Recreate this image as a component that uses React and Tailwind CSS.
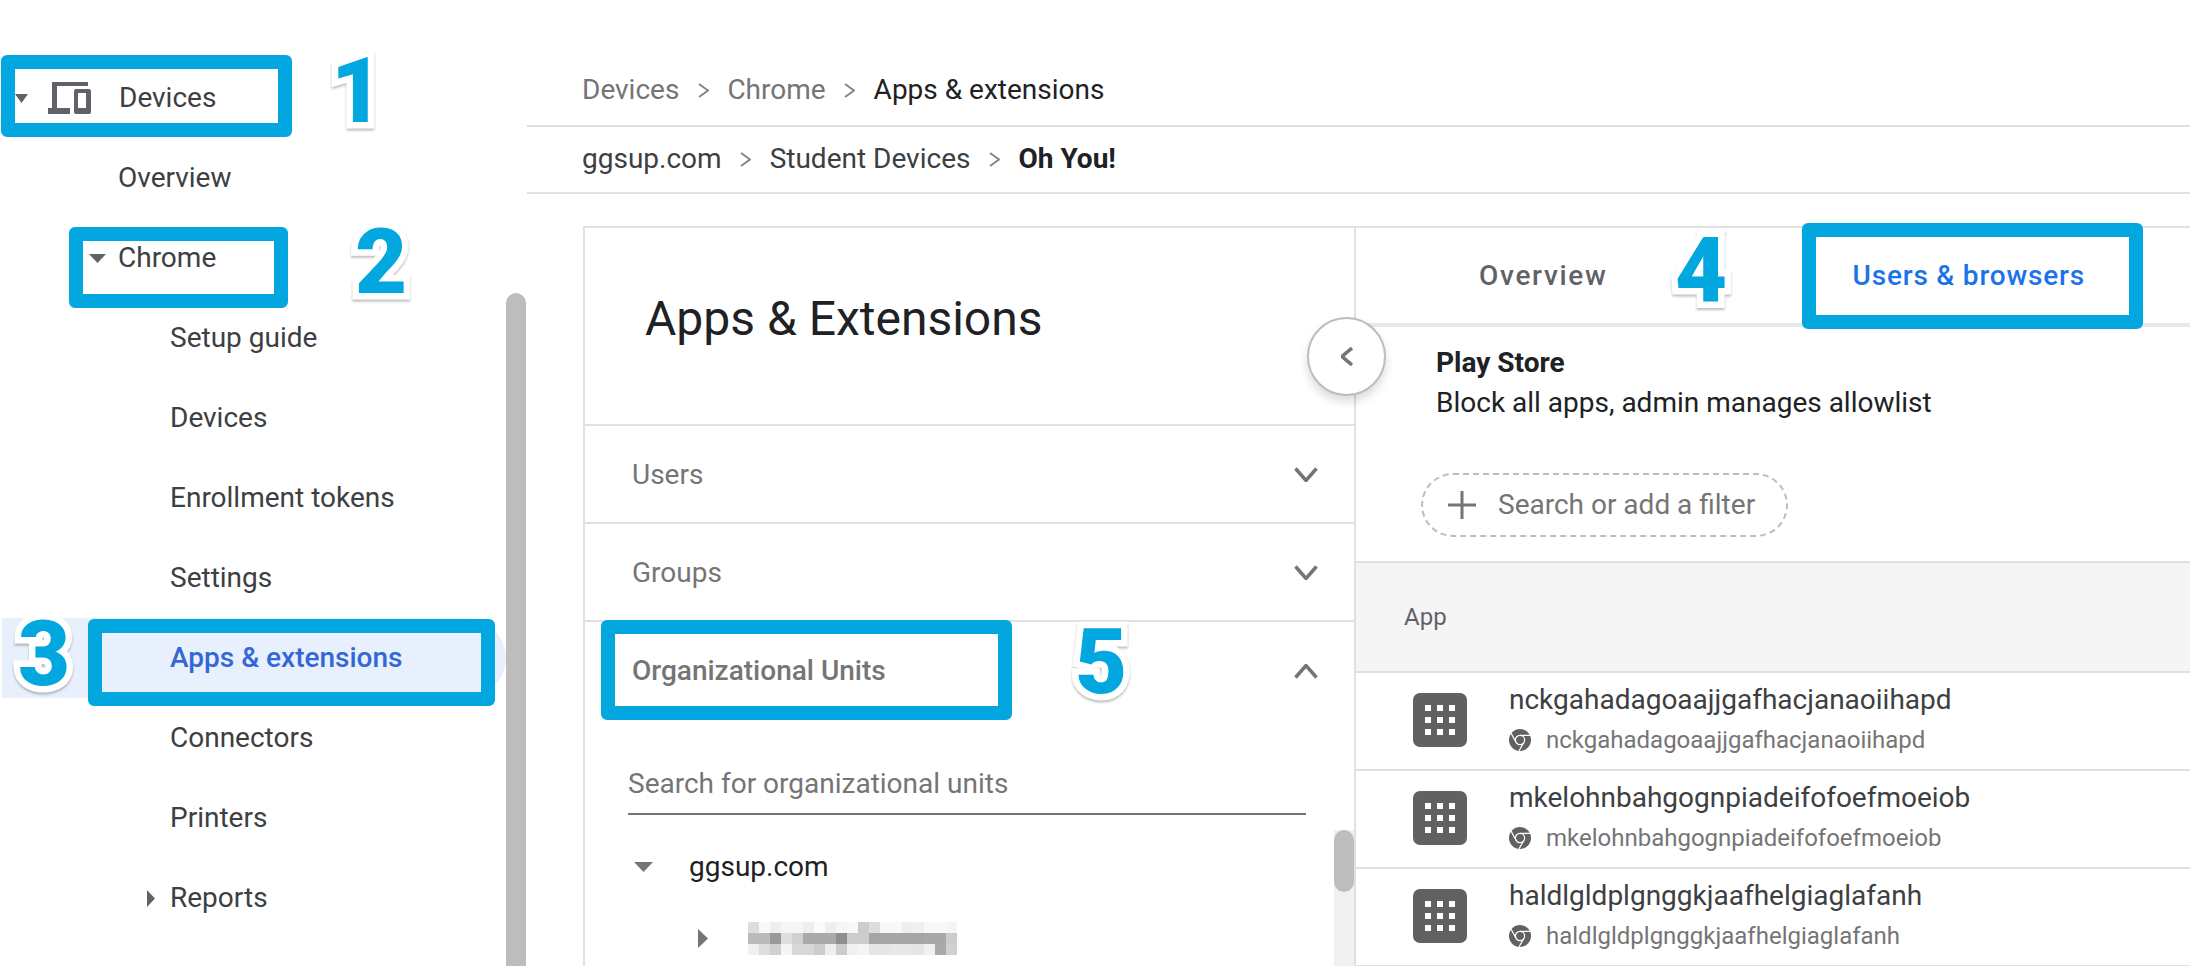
const Caret = ({ dir = "down", w, h, color = "#5f6368", className = "" }) => (
  <svg width={w} height={h} viewBox="0 0 10 10" preserveAspectRatio="none" className={className}>
    <polygon points={dir === "down" ? "0,0 10,0 5,10" : "0,0 10,5 0,10"} fill={color} />
  </svg>
);

const Chev = ({ dir = "right", w = 11, h = 15, sw = 2, color = "#80868b", className = "" }) => {
  const pts = {
    right: `1,1 ${w - 1},${h / 2} 1,${h - 1}`,
    left: `${w - 1},1 1,${h / 2} ${w - 1},${h - 1}`,
    down: `1.5,1.5 ${w / 2},${h - 1.5} ${w - 1.5},1.5`,
    up: `1.5,${h - 1.5} ${w / 2},1.5 ${w - 1.5},${h - 1.5}`,
  }[dir];
  return (
    <svg width={w} height={h} viewBox={`0 0 ${w} ${h}`} className={className}>
      <polyline points={pts} fill="none" stroke={color} strokeWidth={sw} />
    </svg>
  );
};

const Sep = () => (
  <span className="flex h-[40px] w-[48px] items-center justify-center">
    <Chev />
  </span>
);

const DevicesIcon = () => (
  <svg width="43" height="32" viewBox="0 0 43 32" className="shrink-0">
    <path d="M4 0H40V4H9V26H22V32H0V26H4Z" fill="#5f6368" />
    <path
      fillRule="evenodd"
      d="M28 7H41A2 2 0 0 1 43 9V30A2 2 0 0 1 41 32H28A2 2 0 0 1 26 30V9A2 2 0 0 1 28 7ZM30 11V26H38V11Z"
      fill="#5f6368"
    />
  </svg>
);

const AppIcon = () => (
  <div className="mt-[20px] ml-[57px] grid h-[54px] w-[54px] shrink-0 grid-cols-3 content-center justify-center gap-[6px] rounded-[7px] bg-[#616161] px-[12px]">
    {Array.from({ length: 9 }).map((_, i) => (
      <span key={i} className="h-[6px] w-[6px] bg-white" />
    ))}
  </div>
);

const ChromeMono = () => (
  <svg width="22" height="22" viewBox="0 0 22 22" className="shrink-0">
    <circle cx="11" cy="11" r="11" fill="#616161" />
    <circle cx="11" cy="11" r="4.6" fill="#616161" stroke="#fff" strokeWidth="1.2" />
    <path d="M11 6.4H21M15 13.3L10 21.8M7 13.3L2 4" stroke="#fff" strokeWidth="1.2" fill="none" />
  </svg>
);

const Blur = () => {
  const rows = [
    ["#dddddd", "#f8f8f8", "#eeeeee", "#f5f5f5", "#f5f5f5", "#eeeeee", "#fbfbfb", "#eeeeee", "#f5f5f5", "#f8f8f8", "#cccccc", "#dddddd", "#f8f8f8", "#f8f8f8", "#eeeeee", "#f0f0f0", "#f8f8f8", "#f8f8f8", "#f5f5f5"],
    ["#bbbbbb", "#bbbbbb", "#999999", "#dddddd", "#d0d0d0", "#aaaaaa", "#aaaaaa", "#aaaaaa", "#8f8f8f", "#cccccc", "#cccccc", "#a5a5a5", "#a5a5a5", "#a5a5a5", "#a5a5a5", "#a5a5a5", "#a8a8a8", "#a8a8a8", "#cccccc"],
    ["#f0f0f0", "#dddddd", "#d0d0d0", "#f5f5f5", "#d8d8d8", "#d8d8d8", "#cccccc", "#eeeeee", "#cccccc", "#f0f0f0", "#f5f5f5", "#e5e5e5", "#e5e5e5", "#e8e8e8", "#e8e8e8", "#e5e5e5", "#f0f0f0", "#aaaaaa", "#d0d0d0"],
  ];
  return (
    <svg width="209" height="33" viewBox="0 0 209 33" shapeRendering="crispEdges">
      {rows.map((r, y) =>
        r.map((c, x) => <rect key={`${x}-${y}`} x={x * 11} y={y * 11} width="11" height="11" fill={c} />)
      )}
    </svg>
  );
};

const NavRow = ({ children, className = "" }) => (
  <div className={`flex h-[80px] items-center ${className}`}>{children}</div>
);

const SubRow = ({ label }) => <NavRow className="pl-[170px]">{label}</NavRow>;

const Box = ({ className }) => (
  <div className={`absolute rounded-[6px] border-[14px] border-[#03a7e0] ${className}`} />
);

const Num = ({ n, className }) => (
  <div
    className={`absolute font-['Roboto'] text-[90px] leading-none font-black text-[#03a7e0] drop-shadow-[0_2px_1px_rgba(0,0,0,0.25)] [-webkit-text-stroke:13px_white] [paint-order:stroke_fill] ${className}`}
  >
    {n}
  </div>
);

const AccRow = ({ label, dir = "down" }) => (
  <div className="flex h-[98px] shrink-0 items-center justify-between border-b-2 border-[#e0e0e0] pr-[36px] pl-[47px] text-[#757575]">
    <span className="pt-[2px]">{label}</span>
    <Chev dir={dir} w={24} h={15} sw={3.5} color="#757575" />
  </div>
);

const AppRow = ({ id }) => (
  <div className="flex h-[98px] shrink-0 items-start border-b-2 border-[#e0e0e0]">
    <AppIcon />
    <div className="ml-[42px] pt-[10px]">
      <div className="leading-[34px] text-[#3c4043]">{id}</div>
      <div className="mt-[8px] flex h-[30px] items-center text-[24px] leading-[30px] text-[#757575]">
        <ChromeMono />
        <span className="ml-[15px]">{id}</span>
      </div>
    </div>
  </div>
);

export default function App() {
  return (
    <div className="relative flex h-[966px] w-[2190px] overflow-hidden bg-white font-['Roboto'] text-[28px] text-[#3c4043]">
      <aside className="flex w-[527px] shrink-0">
        <nav className="grow pt-[58px]">
          <NavRow className="pl-[15px]">
            <Caret w={13} h={9} />
            <span className="ml-[20px]"><DevicesIcon /></span>
            <span className="ml-[28px]">Devices</span>
          </NavRow>
          <NavRow className="pl-[118px]">Overview</NavRow>
          <NavRow className="pl-[89px]">
            <Caret w={17} h={9} />
            <span className="ml-[12px]">Chrome</span>
          </NavRow>
          <SubRow label="Setup guide" />
          <SubRow label="Devices" />
          <SubRow label="Enrollment tokens" />
          <SubRow label="Settings" />
          <div className="ml-[2px] flex h-[80px] items-center rounded-r-full bg-[#e8f0fe] pl-[168px] font-medium text-[#3367d6]">
            Apps &amp; extensions
          </div>
          <SubRow label="Connectors" />
          <SubRow label="Printers" />
          <NavRow className="pl-[147px]">
            <Caret dir="right" w={8} h={17} />
            <span className="ml-[15px]">Reports</span>
          </NavRow>
        </nav>
        <div className="mt-[293px] mr-px w-[20px] rounded-t-full bg-[#bdbdbd]" />
      </aside>

      <main className="flex min-w-0 grow flex-col">
        <div className="flex h-[127px] shrink-0 items-start border-b-2 border-[#e0e0e0] pt-[70px] pl-[55px] leading-[40px] text-[#757575]">
          <span>Devices</span>
          <Sep />
          <span>Chrome</span>
          <Sep />
          <span className="text-[#202124]">Apps &amp; extensions</span>
        </div>
        <div className="flex h-[67px] shrink-0 items-start border-b-2 border-[#e0e0e0] pt-[12px] pl-[55px] leading-[40px] text-[#3c4043]">
          <span>ggsup.com</span>
          <Sep />
          <span>Student Devices</span>
          <Sep />
          <span className="font-bold text-[#202124]">Oh You!</span>
        </div>

        <div className="mt-[32px] ml-[56px] flex grow border-t-2 border-[#e0e0e0]">
          <section className="flex w-[773px] shrink-0 flex-col border-x-2 border-[#e0e0e0]">
            <div className="h-[198px] shrink-0 border-b-2 border-[#e0e0e0] pt-[64px] pl-[60px] text-[48px] leading-[54px] text-[#202124]">
              Apps &amp; Extensions
            </div>
            <AccRow label="Users" />
            <AccRow label="Groups" />
            <div className="flex h-[98px] shrink-0 items-center justify-between pr-[36px] pl-[47px] font-medium text-[#757575]">
              <span>Organizational Units</span>
              <Chev dir="up" w={24} h={15} sw={3.5} color="#757575" />
            </div>
            <div className="ml-[43px] flex h-[95px] w-[678px] shrink-0 items-end border-b-2 border-[#757575] pb-[9px] leading-[40px] text-[#757575]">
              Search for organizational units
            </div>
            <div className="flex grow">
              <div className="grow pt-[17px]">
                <div className="flex h-[70px] items-center pl-[49px] text-[#202124]">
                  <Caret w={19} h={10} color="#757575" />
                  <span className="ml-[36px]">ggsup.com</span>
                </div>
                <div className="flex h-[72px] items-center pl-[113px]">
                  <Caret dir="right" w={10} h={19} color="#757575" />
                  <span className="ml-[40px] flex"><Blur /></span>
                </div>
              </div>
              <div className="mt-[15px] w-[20px] bg-[#f1f1f1]">
                <div className="h-[62px] rounded-full bg-[#bdbdbd]" />
              </div>
            </div>
          </section>

          <section className="flex min-w-0 grow flex-col">
            <div className="flex h-[99px] shrink-0 items-center border-b-4 border-[#e8e8e8] pl-[123px] font-medium">
              <span className="tracking-[1.7px] text-[#5f6368]">Overview</span>
              <span className="ml-[245px] tracking-[0.8px] text-[#1a73e8]">Users &amp; browsers</span>
            </div>
            <div className="h-[236px] shrink-0 border-b-2 border-[#e0e0e0] pt-[16px]">
              <div className="pl-[80px] leading-[39px] text-[#202124]">
                <div className="font-bold">Play Store</div>
                <div className="pt-px">Block all apps, admin manages allowlist</div>
              </div>
              <div className="mt-[51px] ml-[65px] flex h-[64px] w-[367px] items-center rounded-full border-2 border-dashed border-[#bdbdbd] pl-[24px] text-[#757575]">
                <svg width="30" height="30" viewBox="0 0 30 30" className="shrink-0">
                  <path d="M15 1V29M1 15H29" stroke="#757575" strokeWidth="3" fill="none" />
                </svg>
                <span className="ml-[21px]">Search or add a filter</span>
              </div>
            </div>
            <div className="flex h-[110px] shrink-0 items-center border-b-2 border-[#e0e0e0] bg-[#f5f5f5] pl-[48px] text-[24px] font-normal text-[#5f6368]">
              App
            </div>
            <AppRow id="nckgahadagoaajjgafhacjanaoiihapd" />
            <AppRow id="mkelohnbahgognpiadeifofoefmoeiob" />
            <AppRow id="haldlgldplgnggkjaafhelgiaglafanh" />
          </section>
        </div>
      </main>

      <Box className="top-[55px] left-px h-[82px] w-[291px]" />
      <Box className="top-[227px] left-[69px] h-[81px] w-[219px]" />
      <Box className="top-[619px] left-[88px] h-[87px] w-[407px]" />
      <Box className="top-[223px] left-[1802px] h-[106px] w-[341px]" />
      <Box className="top-[620px] left-[601px] h-[100px] w-[411px]" />

      <Num n="1" className="top-[47px] left-[331px]" />
      <Num n="2" className="top-[218px] left-[355px]" />
      <Num n="3" className="top-[610px] left-[18px]" />
      <Num n="4" className="top-[227px] left-[1675px]" />
      <Num n="5" className="top-[618px] left-[1075px]" />

      <div className="absolute top-[317px] left-[1307px] flex h-[79px] w-[79px] items-center justify-center rounded-full border-2 border-[#bdbdbd] bg-white shadow-[0_6px_10px_rgba(0,0,0,0.14)]">
        <Chev dir="left" w={12} h={19} sw={3.5} color="#757575" />
      </div>
    </div>
  );
}
